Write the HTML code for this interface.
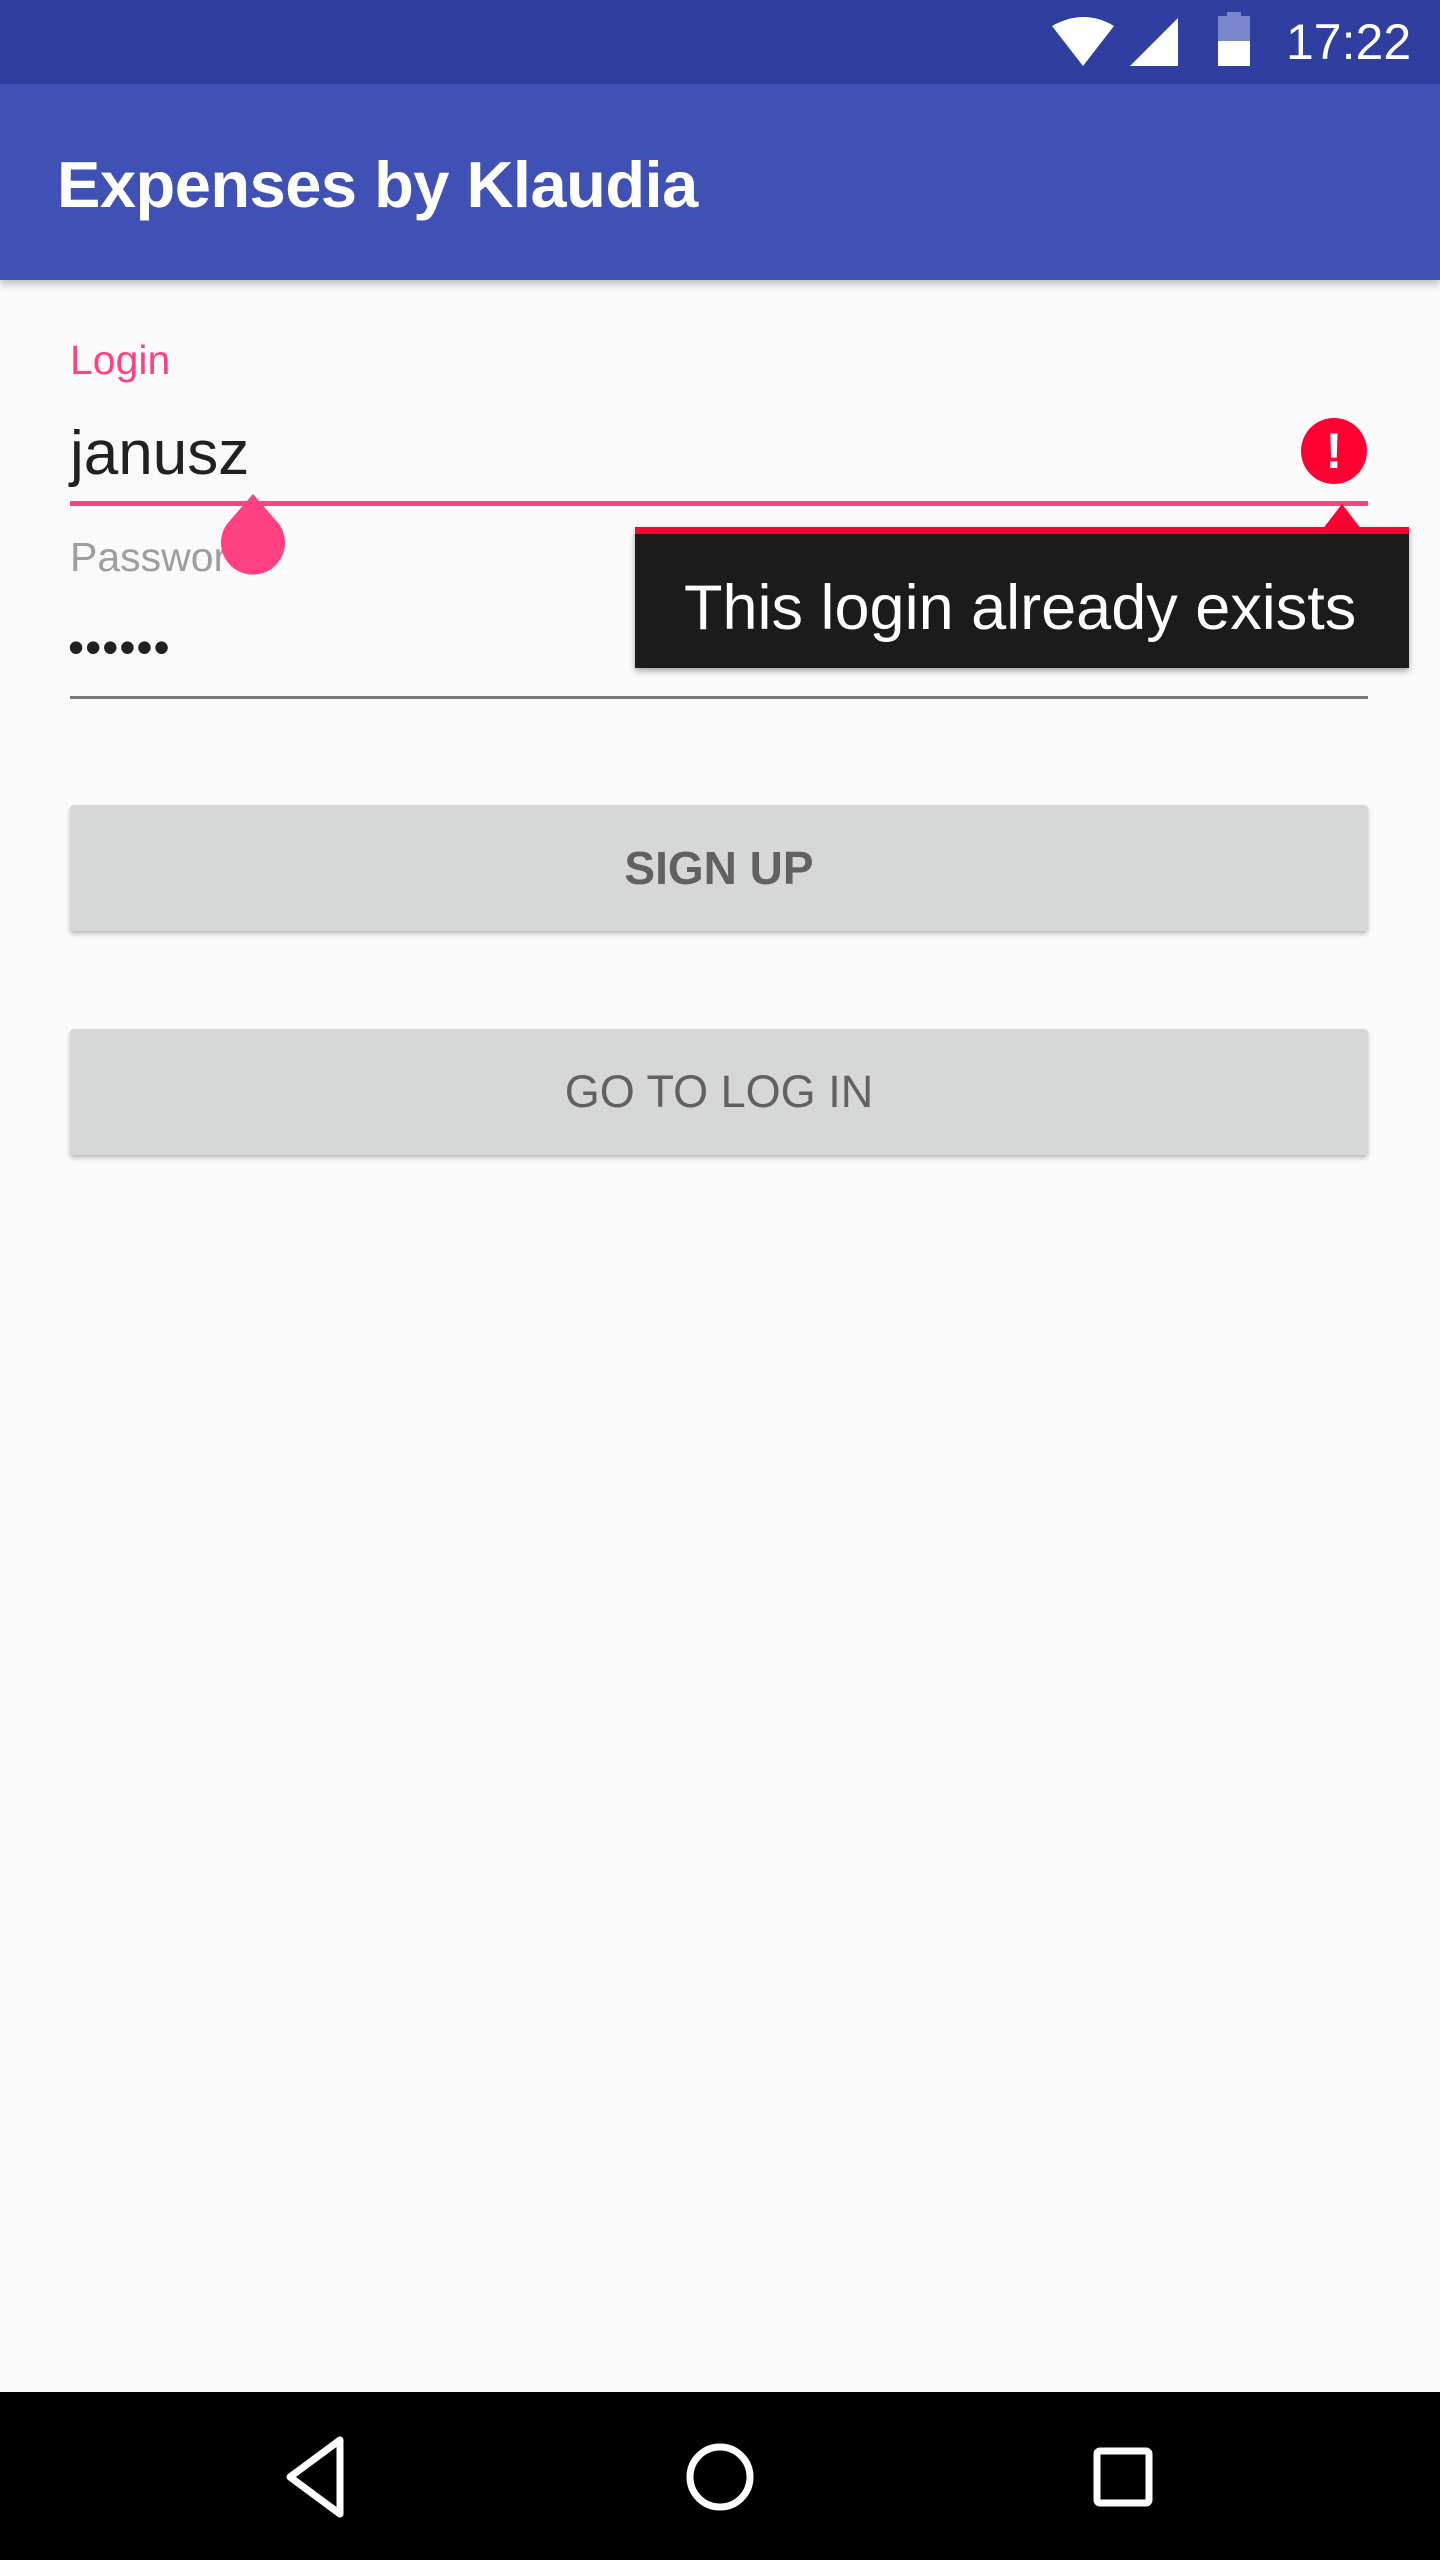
<!DOCTYPE html>
<html><head><meta charset="utf-8"><style>
*{margin:0;padding:0;box-sizing:border-box}
body{width:1440px;height:2560px;background:#fafafa;font-family:"Liberation Sans",sans-serif;position:relative;overflow:hidden}
.abs{position:absolute}
</style></head><body>
<div class="abs" style="left:0;top:0;width:1440px;height:84px;background:#303F9F"></div>
<svg class="abs" style="left:1050px;top:14px" width="130" height="56" viewBox="0 0 130 56">
<path d="M2 12 Q34 -6 64 12 L33 52 Z" fill="#fff"/>
<path d="M80 52 L128 52 L128 4 Z" fill="#fff"/>
</svg>
<div class="abs" style="left:1218px;top:16px;width:32px;height:50px;background:#fff"></div>
<div class="abs" style="left:1218px;top:16px;width:32px;height:25px;background:#7986CB"></div>
<div class="abs" style="left:1227px;top:12px;width:14px;height:5px;background:#7986CB"></div>
<div class="abs" style="left:1286px;top:14px;color:#fff;font-size:50px;line-height:56px">17:22</div>
<div class="abs" style="left:0;top:84px;width:1440px;height:196px;background:#3F51B5;box-shadow:0 4px 8px rgba(0,0,0,.25)"></div>
<div class="abs" style="left:57px;top:145px;color:#fff;font-size:65px;font-weight:bold;line-height:80px;letter-spacing:-0.5px">Expenses by Klaudia</div>
<div class="abs" style="left:70px;top:335px;color:#FF4081;font-size:41px;line-height:50px">Login</div>
<div class="abs" style="left:70px;top:416px;color:#212121;font-size:62px;line-height:76px">janusz</div>
<div class="abs" style="left:70px;top:501px;width:1298px;height:5px;background:#FF4081"></div>
<div class="abs" style="left:1301px;top:418px;width:66px;height:66px;border-radius:50%;background:#FF0033;color:#fff;font-weight:bold;font-size:50px;text-align:center;line-height:66px">!</div>
<div class="abs" style="left:70px;top:532px;color:#9E9E9E;font-size:41px;line-height:50px">Passwor</div>
<svg class="abs" style="left:219px;top:492px" width="68" height="86" viewBox="0 0 68 86"><path d="M34 2 L60 32 A32 32 0 1 1 8 32 Z" fill="#FF4081"/></svg>
<div class="abs" style="left:68px;top:612px;color:#212121;font-size:46px;line-height:70px;letter-spacing:1px">••••••</div>
<div class="abs" style="left:70px;top:696px;width:1298px;height:3px;background:#777"></div>
<svg class="abs" style="left:1322px;top:504px" width="40" height="26"><path d="M20 0 L40 26 L0 26 Z" fill="#FF0033"/></svg>
<div class="abs" style="left:635px;top:527px;width:774px;height:141px;background:#1b1b1b;border-top:7px solid #FF0033;box-shadow:0 3px 6px rgba(0,0,0,.35)"></div>
<div class="abs" style="left:684px;top:570px;color:#fff;font-size:63px;line-height:76px">This login already exists</div>
<div class="abs" style="left:70px;top:805px;width:1298px;height:126px;background:#D6D7D7;border-radius:4px;box-shadow:0 3px 5px rgba(0,0,0,.25);color:#616161;font-size:46px;font-weight:bold;text-align:center;line-height:126px">SIGN UP</div>
<div class="abs" style="left:70px;top:1029px;width:1298px;height:126px;background:#D6D7D7;border-radius:4px;box-shadow:0 3px 5px rgba(0,0,0,.25);color:#616161;font-size:45px;text-align:center;line-height:126px">GO TO LOG IN</div>
<div class="abs" style="left:0;top:2392px;width:1440px;height:168px;background:#000"></div>
<svg class="abs" style="left:0;top:2392px" width="1440" height="168">
<path d="M340 48 L290 85 L340 122 Z" fill="none" stroke="#fff" stroke-width="7" stroke-linejoin="round"/>
<circle cx="720" cy="85" r="30" fill="none" stroke="#fff" stroke-width="7"/>
<rect x="1097" y="59" width="52" height="52" rx="3" fill="none" stroke="#fff" stroke-width="7"/>
</svg>
</body></html>
